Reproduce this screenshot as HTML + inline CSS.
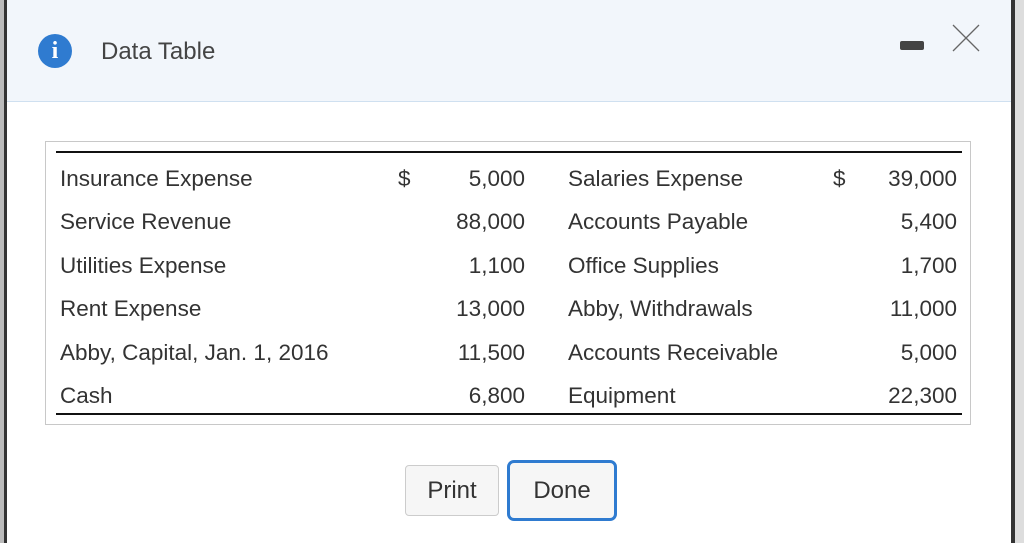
<!DOCTYPE html>
<html><head><style>
body{margin:0;width:1024px;height:543px;overflow:hidden;background:#fff;font-family:"Liberation Sans",Arial,sans-serif;position:relative;color:#333}
.ls{position:absolute;left:0;top:0;width:4px;height:543px;background:#bbb}
.lb{position:absolute;left:4px;top:0;width:3px;height:543px;background:#333}
.rb{position:absolute;left:1011px;top:0;width:4px;height:543px;background:#333}
.rs{position:absolute;left:1015px;top:0;width:9px;height:543px;background:#ddd}
.hdr{position:absolute;left:7px;top:0;width:1004px;height:101px;background:#f2f6fb;border-bottom:1px solid #cfe0f0}
.icon{position:absolute;left:38px;top:34px;width:34px;height:34px;border-radius:50%;background:#2f7bd0;color:#fff;font:bold 24px "Liberation Serif",serif;text-align:center;line-height:34px}
.title{position:absolute;left:101px;top:38px;font-size:24px;color:#444}
.min{position:absolute;left:900px;top:41px;width:24px;height:9px;background:#444;border-radius:2px}
.box{position:absolute;left:45px;top:141px;width:924px;height:282px;border:1px solid #c8c8c8}
.tl{position:absolute;left:56px;width:906px;height:2px;background:#111}
.t{position:absolute;font-size:22.5px;color:#333;line-height:26px}
.r{text-align:right}
.btn{position:absolute;box-sizing:border-box;background:#f6f6f6;font-size:24px;color:#333;text-align:center}
</style></head><body>
<div class="ls"></div><div class="lb"></div><div class="rb"></div><div class="rs"></div>
<div class="hdr"></div>
<div class="icon">i</div>
<div class="title">Data Table</div>
<div class="min"></div>
<svg style="position:absolute;left:952px;top:24px" width="28" height="28"><path d="M1 1L27 27M27 1L1 27" stroke="#666" stroke-width="1.3"/></svg>
<div class="box"></div>
<div class="tl" style="top:151px"></div>
<div class="tl" style="top:413px"></div>
<div class="btn" style="left:405px;top:465px;width:94px;height:51px;border:1px solid #ccc;border-radius:4px;line-height:49px">Print</div>
<div class="btn" style="left:507px;top:460px;width:110px;height:61px;border:3px solid #2f7bd0;border-radius:7px;line-height:55px">Done</div>

<div class="t" style="left:60px;top:166px">Insurance Expense</div>
<div class="t" style="left:398px;top:166px">$</div>
<div class="t r" style="left:405px;width:120px;top:166px">5,000</div>
<div class="t" style="left:568px;top:166px">Salaries Expense</div>
<div class="t" style="left:833px;top:166px">$</div>
<div class="t r" style="left:837px;width:120px;top:166px">39,000</div>

<div class="t" style="left:60px;top:209px">Service Revenue</div>
<div class="t r" style="left:405px;width:120px;top:209px">88,000</div>
<div class="t" style="left:568px;top:209px">Accounts Payable</div>
<div class="t r" style="left:837px;width:120px;top:209px">5,400</div>

<div class="t" style="left:60px;top:253px">Utilities Expense</div>
<div class="t r" style="left:405px;width:120px;top:253px">1,100</div>
<div class="t" style="left:568px;top:253px">Office Supplies</div>
<div class="t r" style="left:837px;width:120px;top:253px">1,700</div>

<div class="t" style="left:60px;top:296px">Rent Expense</div>
<div class="t r" style="left:405px;width:120px;top:296px">13,000</div>
<div class="t" style="left:568px;top:296px">Abby, Withdrawals</div>
<div class="t r" style="left:837px;width:120px;top:296px">11,000</div>

<div class="t" style="left:60px;top:340px">Abby, Capital, Jan. 1, 2016</div>
<div class="t r" style="left:405px;width:120px;top:340px">11,500</div>
<div class="t" style="left:568px;top:340px">Accounts Receivable</div>
<div class="t r" style="left:837px;width:120px;top:340px">5,000</div>

<div class="t" style="left:60px;top:383px">Cash</div>
<div class="t r" style="left:405px;width:120px;top:383px">6,800</div>
<div class="t" style="left:568px;top:383px">Equipment</div>
<div class="t r" style="left:837px;width:120px;top:383px">22,300</div>
</body></html>
